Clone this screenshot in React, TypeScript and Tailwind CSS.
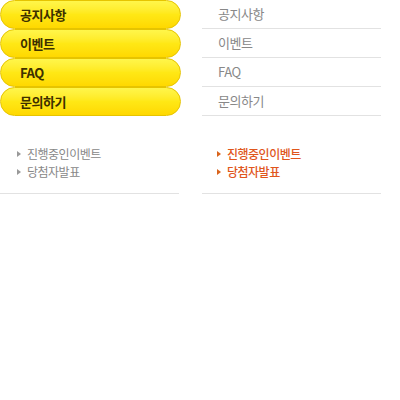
const menus = ["공지사항", "이벤트", "FAQ", "문의하기"]
const subs = ["진행중인이벤트", "당첨자발표"]

const font = "font-['Noto_Sans_CJK_KR','Noto_Sans',sans-serif]"

const Arrow = ({ color }: { color: string }) => (
  <svg width="4" height="6" viewBox="0 0 4 6" className="shrink-0">
    <path d="M0 0 L4 3 L0 6 Z" fill={color} />
  </svg>
)

export default function App() {
  return (
    <div className={`w-[400px] h-[400px] bg-white ${font}`}>
      <div className="flex gap-[21px]">
        <ul className="w-[181px] flex flex-col">
          {menus.map((m) => (
            <li
              key={m}
              className="h-[29px] flex items-center pl-[19px] rounded-full border border-[#e6c400] bg-gradient-to-b from-[#fff64a] via-[#ffe815] to-[#ffd800] text-[13px] font-semibold text-[#3d3000] tracking-[-0.5px]"
            >
              {m}
            </li>
          ))}
        </ul>
        <ul className="w-[179px] flex flex-col">
          {menus.map((m) => (
            <li
              key={m}
              className="h-[29px] flex items-center pl-[16px] border-b border-[#e2e2e2] text-[13px] text-[#888] tracking-[-0.5px]"
            >
              {m}
            </li>
          ))}
        </ul>
      </div>

      <div className="flex gap-[23px] mt-[30px]">
        <ul className="w-[179px] flex flex-col gap-[3px] pl-[17px] pb-[14px] border-b border-[#e2e2e2]">
          {subs.map((s) => (
            <li key={s} className="h-[15px] flex items-center gap-[6px] text-[12px] text-[#888] tracking-[-0.5px]">
              <Arrow color="#999" />
              {s}
            </li>
          ))}
        </ul>
        <ul className="w-[179px] flex flex-col gap-[3px] pl-[15px] pb-[14px] border-b border-[#e2e2e2]">
          {subs.map((s) => (
            <li key={s} className="h-[15px] flex items-center gap-[6px] text-[12px] font-medium text-[#e0561c] tracking-[-0.5px]">
              <Arrow color="#d9641c" />
              {s}
            </li>
          ))}
        </ul>
      </div>
    </div>
  )
}
